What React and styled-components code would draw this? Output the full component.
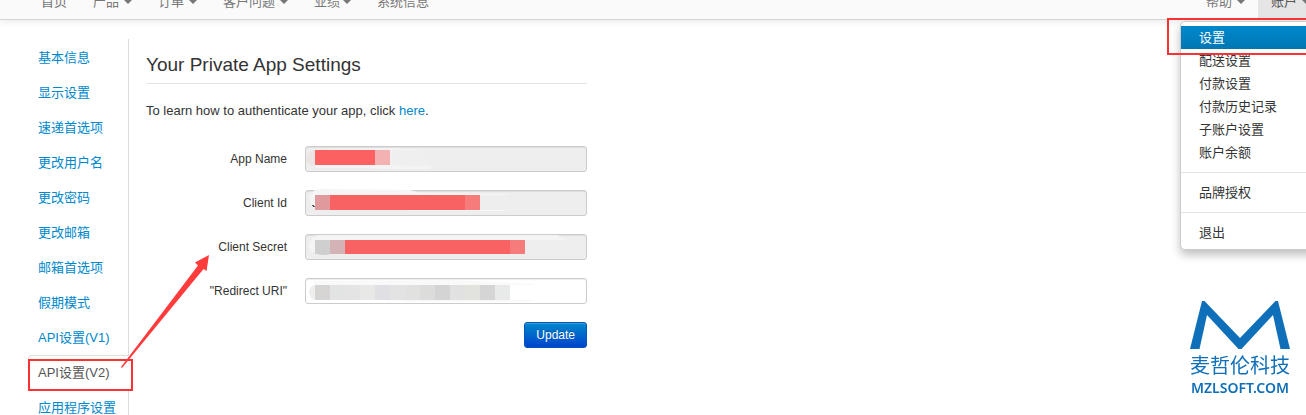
import React from "react";
import styled, { createGlobalStyle, css } from "styled-components";

const GlobalStyle = createGlobalStyle`
  * {
    box-sizing: border-box;
  }
  body {
    margin: 0;
    overflow: hidden;
    background: #fff;
    color: #333;
    font-family: "Liberation Sans", Arial, "Noto Sans CJK SC", sans-serif;
    font-size: 13px;
    line-height: 18px;
  }
  ul {
    margin: 0;
    padding: 0;
    list-style: none;
  }
  a {
    color: #0088cc;
    text-decoration: none;
  }
`;

const mainNav = [
  { label: "首页" },
  { label: "产品", caret: true },
  { label: "订单", caret: true },
  { label: "客户问题", caret: true },
  { label: "业绩", caret: true, tight: true },
  { label: "系统信息" },
];

const accountMenu = [
  ["设置", "配送设置", "付款设置", "付款历史记录", "子账户设置", "账户余额"],
  ["品牌授权"],
  ["退出"],
];

const sideLinks = [
  "基本信息",
  "显示设置",
  "速递首选项",
  "更改用户名",
  "更改密码",
  "更改邮箱",
  "邮箱首选项",
  "假期模式",
  "API设置(V1)",
  "API设置(V2)",
  "应用程序设置",
];

// blocks: [x, width, colour]; smears: brush strokes left around the mosaic
const fields = [
  {
    id: "app-name",
    label: "App Name",
    locked: true,
    top: 4,
    height: 15,
    blocks: [
      [10, 60, "#fb6161"],
      [70, 15, "#f3b1b1"],
    ],
    smears: [
      ["M10 4 Q1 6 1 13 Q2 20 10 19 Z", "#ebe6e3"],
      ["M9 3 L90 2 L122 4 L85 5 Z M10 19 L85 19 L128 20 L122 23 L90 23 Q50 21 10 22 Z", "#f4f4f4"],
      ["M85 4 L118 5 L126 12 L118 20 L85 19 Z", "#efefef"],
    ],
  },
  {
    id: "client-id",
    label: "Client Id",
    locked: true,
    top: 5,
    height: 15,
    remnant: true,
    blocks: [
      [10, 15, "#e09a9d"],
      [25, 135, "#f86262"],
      [160, 15, "#f67b7b"],
    ],
    smears: [
      ["M5 5 Q8 -1 16 -1 L105 0 L115 3 L203 4 L203 5 L10 5 L10 18 Q4 15 5 5 Z", "#f4f5f5"],
      ["M101 20 H203 L198 21 H105 Z", "#f6f6f6"],
    ],
  },
  {
    id: "client-secret",
    label: "Client Secret",
    locked: true,
    top: 6,
    height: 14,
    blocks: [
      [10, 15, "#cfcfcf"],
      [25, 15, "#d4b3b6"],
      [40, 165, "#f86262"],
      [205, 15, "#f67b7b"],
    ],
    smears: [
      ["M12 1 L253 1 L261 6 L10 6 L10 19 Q4 18 4 12 Q5 5 12 1 Z", "#f4f4f4"],
      ["M12 19 H26 V20 Q18 22 12 20 Z", "#cfcfcf"],
    ],
  },
  {
    id: "redirect-uri",
    label: '"Redirect URI"',
    top: 7,
    height: 15,
    blocks: [
      [10, 15, "#d6d5d4"],
      [25, 15, "#e2e4e3"],
      [40, 15, "#e3e4e3"],
      [55, 15, "#e8e8e6"],
      [70, 15, "#e0e0e4"],
      [85, 15, "#e3e3e4"],
      [100, 15, "#e1e1df"],
      [115, 15, "#dcdcda"],
      [130, 15, "#d4d4d4"],
      [145, 15, "#e1e1e2"],
      [160, 15, "#e2e2df"],
      [175, 15, "#d5d5d5"],
      [190, 15, "#e8eaea"],
    ],
    smears: [
      ["M10 7 Q4 8 4 14 Q5 21 10 22 Z", "#eeeeee"],
      ["M9 3 L150 2 L228 6 L228 7 L10 7 Z M80 22 L228 22 L222 24 L110 24 Z", "#f9f9f9"],
    ],
  },
];

function Redaction({ field }) {
  return (
    <RedactionSvg width="282" height="26" viewBox="0 0 282 26" aria-hidden="true">
      {field.smears.map(([d, fill]) => (
        <path key={d} d={d} fill={fill} />
      ))}
      {field.blocks.map(([x, width, fill]) => (
        <rect key={x} x={x} y={field.top} width={width} height={field.height} fill={fill} />
      ))}
      {field.remnant && <path d="M7 15 h2 v1 h1 v1 h-2 v-1 h-1 Z" fill="#555" />}
    </RedactionSvg>
  );
}

function TopBar() {
  return (
    <Header>
      <Nav aria-label="main">
        {mainNav.map((item) => (
          <NavLink key={item.label} href="#" $tight={item.tight}>
            {item.label}
            {item.caret && <Caret />}
          </NavLink>
        ))}
      </Nav>
      <AccountNav aria-label="account">
        <NavLink href="#">
          帮助
          <Caret />
        </NavLink>
        <NavLink href="#" $open>
          账户
          <Caret />
        </NavLink>
        <Menu>
          {accountMenu.map((group) => (
            <MenuSection key={group[0]}>
              <ul>
                {group.map((label) => (
                  <li key={label}>
                    <MenuLink href="#" $active={label === "设置"}>
                      {label}
                    </MenuLink>
                  </li>
                ))}
              </ul>
            </MenuSection>
          ))}
        </Menu>
        <MenuHighlight />
      </AccountNav>
    </Header>
  );
}

function App() {
  return (
    <>
      <GlobalStyle />
      <TopBar />
      <Layout>
        <Sidebar>
          {sideLinks.map((label) => {
            const active = label === "API设置(V2)";
            return (
              <SideItem key={label}>
                <SideLink href="#" $active={active}>
                  {label}
                </SideLink>
                {active && <TabHighlight />}
                {active && (
                  <Arrow width="90" height="113" viewBox="0 0 90 113" aria-hidden="true">
                    <path
                      d="M0 112 L77 10.5 L74 7.5 L88 0 L85.5 16 L82.5 14 L1 113 Z"
                      fill="#ff3b3b"
                    />
                  </Arrow>
                )}
              </SideItem>
            );
          })}
        </Sidebar>
        <Content>
          <Title>Your Private App Settings</Title>
          <Intro>
            To learn how to authenticate your app, click <a href="#">here</a>.
          </Intro>
          <Form onSubmit={(e) => e.preventDefault()}>
            {fields.map((field) => (
              <Row key={field.id}>
                <Label htmlFor={field.id}>{field.label}</Label>
                <Control>
                  <Input id={field.id} type="text" readOnly={field.locked} $locked={field.locked} />
                  <Redaction field={field} />
                </Control>
              </Row>
            ))}
            <UpdateButton type="submit">Update</UpdateButton>
          </Form>
        </Content>
      </Layout>
      <Watermark>
        <svg width="100" height="48" viewBox="0 0 100 48" aria-hidden="true">
          <path
            d="M0 48 L12 0 H14.5 L50 37 L85.5 0 H88 L100 48 H90.5 L83 14 L51.5 48 H48.5 L17 14 L9.5 48 Z"
            fill="#0f70b9"
          />
        </svg>
        <BrandName>麦哲伦科技</BrandName>
        <BrandSite>MZLSOFT.COM</BrandSite>
      </Watermark>
    </>
  );
}

const Header = styled.header`
  display: flex;
  justify-content: space-between;
  align-items: flex-end;
  height: 20px;
  padding-left: 28px;
  background: #fafafa;
  border-bottom: 1px solid #d4d4d4;
  box-shadow: 0 1px 8px rgba(0, 0, 0, 0.1);
`;

const Nav = styled.nav`
  display: flex;
`;

const AccountNav = styled(Nav)`
  position: relative;
  margin-right: -17px;
`;

const NavLink = styled.a`
  display: flex;
  align-items: center;
  gap: ${(props) => (props.$tight ? 3 : 5)}px;
  padding: 10px 13px 7px;
  line-height: 20px;
  color: #777;
  white-space: nowrap;
  ${(props) =>
    props.$open &&
    css`
      background: #e5e5e5;
      color: #555;
    `}
`;

const Caret = styled.span`
  border: 4px solid transparent;
  border-top-color: #777;
  border-bottom: 0;
`;

const Menu = styled.div`
  position: absolute;
  top: 100%;
  right: 0;
  width: 143px;
  margin-top: 2px;
  padding: 4px 0 5px;
  background: #fff;
  border: 1px solid #ccc;
  border-radius: 5px;
  box-shadow: 0 5px 10px rgba(0, 0, 0, 0.25);
`;

const MenuSection = styled.div`
  & + & {
    margin-top: 8px;
    padding-top: 8px;
    border-top: 1px solid #e5e5e5;
  }
`;

const MenuLink = styled.a`
  display: block;
  padding: 0 18px;
  line-height: 23px;
  color: #333;
  ${(props) =>
    props.$active &&
    css`
      color: #fff;
      background: linear-gradient(#0088cc, #0077b3);
    `}
`;

const MenuHighlight = styled.div`
  position: absolute;
  top: 100%;
  right: 0;
  width: 156px;
  height: 37px;
  margin-top: -1px;
  border: 2px solid #fb3233;
`;

const Layout = styled.div`
  display: flex;
  padding: 19px 28px 0;
`;

const Sidebar = styled.ul`
  flex: 0 0 101px;
  padding-top: 1px;
  border-right: 1px solid #ddd;
`;

const SideItem = styled.li`
  position: relative;
`;

const SideLink = styled.a`
  display: block;
  margin-right: -1px;
  padding: 0 9px;
  border: 1px solid transparent;
  border-right: 0;
  border-radius: 4px 0 0 4px;
  line-height: 33px;
  white-space: nowrap;
  ${(props) =>
    props.$active &&
    css`
      position: relative;
      color: #555;
      background: #fff;
      border-color: #ddd;
    `}
`;

const TabHighlight = styled.div`
  position: absolute;
  top: 4px;
  left: 0;
  width: 105px;
  height: 32px;
  border: 2px solid #fb3233;
`;

const Arrow = styled.svg`
  position: absolute;
  left: 93px;
  bottom: 22px;
`;

const Content = styled.main`
  flex: 0 1 441px;
  margin-left: 17px;
`;

const Title = styled.h1`
  margin: 8px 0 18px;
  border-bottom: 1px solid #e5e5e5;
  font-size: 19px;
  font-weight: normal;
  line-height: 36px;
`;

const Intro = styled.p`
  margin: 0 0 26px;
`;

const Form = styled.form`
  display: flex;
  flex-direction: column;
  gap: 18px;
`;

const Row = styled.div`
  display: flex;
  align-items: center;
  gap: 18px;
`;

const Label = styled.label`
  flex: 0 0 141px;
  font-size: 12px;
  text-align: right;
`;

const Control = styled.div`
  position: relative;
  flex: 1;
`;

const Input = styled.input`
  display: block;
  width: 100%;
  height: 26px;
  padding: 4px;
  font: inherit;
  color: #555;
  background: ${(props) => (props.$locked ? "#eee" : "#fff")};
  border: 1px solid #ccc;
  border-radius: 3px;
  box-shadow: inset 0 1px 1px rgba(0, 0, 0, 0.075);
`;

const RedactionSvg = styled.svg`
  position: absolute;
  top: 0;
  left: 0;
  overflow: visible;
  pointer-events: none;
`;

const UpdateButton = styled.button`
  align-self: flex-end;
  padding: 3px 11px;
  font: inherit;
  font-size: 12px;
  color: #fff;
  background: linear-gradient(#0088cc, #0044cc);
  border: 1px solid #0055bb;
  border-radius: 3px;
  box-shadow: inset 0 1px 0 rgba(255, 255, 255, 0.2);
  text-shadow: 0 -1px 0 rgba(0, 0, 0, 0.25);
  cursor: pointer;
`;

const Watermark = styled.div`
  position: fixed;
  right: 16px;
  bottom: 18px;
  display: flex;
  flex-direction: column;
  align-items: center;
  color: #0f70b9;
`;

const BrandName = styled.span`
  margin-top: 5px;
  font-size: 20px;
  line-height: 24px;
`;

const BrandSite = styled.strong`
  font-family: "Noto Sans", "Open Sans", sans-serif;
  font-size: 14px;
  font-weight: 600;
  line-height: 19px;
`;

export default App;
